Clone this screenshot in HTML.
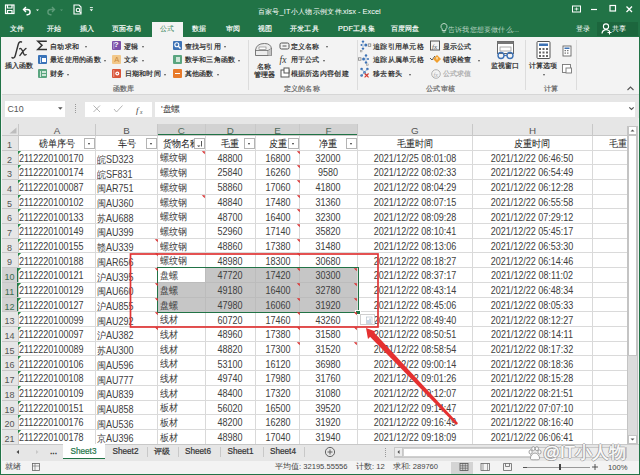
<!DOCTYPE html>
<html><head><meta charset="utf-8"><style>
html,body{margin:0;padding:0;}
body{width:640px;height:475px;overflow:hidden;position:relative;background:#f3f3f3;font-family:"Liberation Sans", sans-serif;}
body>div,body>svg{position:absolute;}
.t{white-space:nowrap;}
.r{-webkit-text-stroke:0.2px currentColor;}
</style></head><body>
<div style="left:0px;top:0px;width:640px;height:36.5px;background:#217346"></div>
<div style="left:0px;top:0px;width:1.2px;height:475px;background:#217346;z-index:50"></div>
<div style="left:638.8px;top:0px;width:1.2px;height:475px;background:#217346;z-index:50"></div>
<div style="left:0px;top:473.5px;width:640px;height:1.5px;background:#217346;z-index:50"></div>
<svg style="left:0;top:0;z-index:5" width="200" height="24" viewBox="0 0 200 24">
<g fill="none" stroke="#fff" stroke-width="1.2">
<rect x="5.5" y="5" width="8.5" height="8.5"/>
<path d="M7.5 5v3h4.5v-3M7.5 13.5v-3h4.5v3"/>
</g>
<path d="M26 7 l-2.5 2.5 2.5 2.5 M23.8 9.5 h3.7 a2.6 2.6 0 0 1 0 5.2 h-1" fill="none" stroke="#fff" stroke-width="1.4"/>
<path d="M36 9.5h3l-1.5 1.6z" fill="#fff"/>
<path d="M52 7 l2.5 2.5 -2.5 2.5 M54.2 9.5 h-3.7 a2.6 2.6 0 0 0 0 5.2 h1" fill="none" stroke="#5e9c7a" stroke-width="1.4"/>
<path d="M60 9.5h3l-1.5 1.6z" fill="#5e9c7a"/>
<g fill="none" stroke="#fff" stroke-width="1.1">
<path d="M74 5h5l2 2v7h-7z"/>
<circle cx="78" cy="10" r="1.8"/><path d="M79.3 11.3l1.7 1.7"/>
</g>
<path d="M89.7 9.3h3.4l-1.7 1.9z" fill="#fff"/>
<path d="M89.9 7.6h3" stroke="#fff" stroke-width="0.9"/>
</svg>
<div class="t" style="left:257.5px;top:7.5px;font-size:7.3px;line-height:7.3px;color:#fff;letter-spacing:.3px">百家号_IT小人物示例文件</div>
<div class="t" style="left:341px;top:7.5px;font-size:7.6px;line-height:7.6px;color:#fff;transform:scaleX(0.98);transform-origin:0 0;">.xlsx - Excel</div>
<svg style="left:560;top:0;z-index:5;left:560px" width="80" height="20" viewBox="0 0 80 20">
<g fill="none" stroke="#fff" stroke-width="1">
<rect x="12.5" y="6" width="8" height="6"/>
<path d="M14.5 9 h4 M16.5 7.5 v3" stroke-width="0.8"/>
<path d="M31 9.5h6" stroke-width="1.2"/>
<rect x="50" y="5.5" width="5.5" height="5.5" stroke-width="1.2"/>
<path d="M66.5 6.5l5.5 5.5M72 6.5l-5.5 5.5" stroke-width="1.3"/>
</g></svg>
<div style="left:152px;top:22px;width:31px;height:15px;background:#f3f3f3"></div>
<div class="t" style="left:160px;top:25px;font-size:7.3px;line-height:7.3px;color:#217346;letter-spacing:.2px">公式</div>
<div class="t" style="left:10px;top:25px;font-size:7.3px;line-height:7.3px;color:#fff;letter-spacing:.2px;-webkit-text-stroke:0.15px currentColor">文件</div>
<div class="t" style="left:47px;top:25px;font-size:7.3px;line-height:7.3px;color:#fff;letter-spacing:.2px;-webkit-text-stroke:0.15px currentColor">开始</div>
<div class="t" style="left:80px;top:25px;font-size:7.3px;line-height:7.3px;color:#fff;letter-spacing:.2px;-webkit-text-stroke:0.15px currentColor">插入</div>
<div class="t" style="left:112px;top:25px;font-size:7.3px;line-height:7.3px;color:#fff;letter-spacing:.2px;-webkit-text-stroke:0.15px currentColor">页面布局</div>
<div class="t" style="left:192px;top:25px;font-size:7.3px;line-height:7.3px;color:#fff;letter-spacing:.2px;-webkit-text-stroke:0.15px currentColor">数据</div>
<div class="t" style="left:226px;top:25px;font-size:7.3px;line-height:7.3px;color:#fff;letter-spacing:.2px;-webkit-text-stroke:0.15px currentColor">审阅</div>
<div class="t" style="left:258px;top:25px;font-size:7.3px;line-height:7.3px;color:#fff;letter-spacing:.2px;-webkit-text-stroke:0.15px currentColor">视图</div>
<div class="t" style="left:290px;top:25px;font-size:7.3px;line-height:7.3px;color:#fff;letter-spacing:.2px;-webkit-text-stroke:0.15px currentColor">开发工具</div>
<div class="t" style="left:338px;top:25px;font-size:7.3px;line-height:7.3px;color:#fff;letter-spacing:.2px;-webkit-text-stroke:0.15px currentColor">PDF工具集</div>
<div class="t" style="left:390.5px;top:25px;font-size:7.3px;line-height:7.3px;color:#fff;letter-spacing:.2px;-webkit-text-stroke:0.15px currentColor">百度网盘</div>
<div style="left:597px;top:21.5px;width:41px;height:14px;background:#1c663d"></div>
<svg style="left:437.5px;top:21px;z-index:5" width="12" height="14" viewBox="0 0 12 14">
<path d="M6 2.5a3 3 0 0 0-1.8 5.4v1.6h3.6v-1.6A3 3 0 0 0 6 2.5z M4.6 11h2.8" fill="none" stroke="#cfe3d6" stroke-width="0.9"/></svg>
<div class="t" style="left:448px;top:25.5px;font-size:7px;line-height:7px;color:#b9d4c3;letter-spacing:.2px">告诉我您想要做什么...</div>
<div class="t" style="left:576px;top:25px;font-size:7.3px;line-height:7.3px;color:#fff;letter-spacing:.3px">登录</div>
<svg style="left:601px;top:21px;z-index:5" width="12" height="14" viewBox="0 0 12 14">
<circle cx="5" cy="5.5" r="2.6" fill="none" stroke="#fff" stroke-width="1.1"/>
<path d="M1 12.5a4 4 0 0 1 7-2.5 M8.5 9.5v4 M6.5 11.5h4" fill="none" stroke="#fff" stroke-width="1.1"/></svg>
<div class="t" style="left:612px;top:25px;font-size:7.3px;line-height:7.3px;color:#fff;letter-spacing:.3px">共享</div>
<div style="left:1.5px;top:36.5px;width:637px;height:57px;background:#f3f3f3"></div>
<div style="left:1.5px;top:93.5px;width:637px;height:1px;background:#d6d6d6"></div>
<svg style="left:5px;top:38px" width="30" height="24" viewBox="0 0 30 24"><path d="M7 19.6Q9.3 21 10.3 17.5L13.2 6.5Q14.2 3 16.5 4" fill="none" stroke="#333" stroke-width="1.4" stroke-linecap="round"/><path d="M14.6 10.8Q16 9.8 17 12L18.8 16Q19.6 17.8 21.2 16.6M21 10.5Q20 10.6 14.8 17.6" fill="none" stroke="#333" stroke-width="1.3" stroke-linecap="round"/></svg>
<div class="t" style="left:4.5px;top:62px;font-size:7.3px;line-height:7.3px;color:#262626;letter-spacing:.3px;-webkit-text-stroke:0.2px currentColor">插入函数</div>
<svg style="left:36px;top:40px" width="12" height="11" viewBox="0 0 12 11"><path d="M10.8 1.2H1.8L6 5.3 1.8 9.6h9.2" fill="none" stroke="#333" stroke-width="1.5" stroke-linejoin="miter"/></svg>
<div class="t" style="left:50px;top:42.5px;font-size:7.3px;line-height:7.3px;color:#262626;letter-spacing:.3px;-webkit-text-stroke:0.2px currentColor">自动求和</div>
<div style="left:84.5px;top:46px;width:0;height:0;border-left:1.8px solid transparent;border-right:1.8px solid transparent;border-top:2px solid #555;z-index:4"></div>
<div style="left:38px;top:55px;width:9px;height:9px;background:#3a73b8;border-radius:1px"></div>
<div style="left:39.5px;top:56.5px;width:1px;height:6px;background:#bcd3ee"></div>
<div style="left:42px;top:57.5px;width:3.5px;height:4px;background:#fff"></div>
<div class="t" style="left:50px;top:55.5px;font-size:7.3px;line-height:7.3px;color:#262626;letter-spacing:.3px;-webkit-text-stroke:0.2px currentColor">最近使用的函数</div>
<div style="left:103.5px;top:59.5px;width:0;height:0;border-left:1.8px solid transparent;border-right:1.8px solid transparent;border-top:2px solid #555;z-index:4"></div>
<div style="left:38px;top:69px;width:9px;height:9px;background:#5aa57f;border-radius:1px"></div>
<div style="left:39.5px;top:70.5px;width:1px;height:6px;background:#cfe6d8"></div>
<div style="left:42px;top:71px;width:3.5px;height:5px;background:#cfe6d8"></div>
<div style="left:42px;top:73.2px;width:3.5px;height:0.8px;background:#5aa57f"></div>
<div class="t" style="left:50px;top:70px;font-size:7.3px;line-height:7.3px;color:#262626;letter-spacing:.3px;-webkit-text-stroke:0.2px currentColor">财务</div>
<div style="left:66.5px;top:73.5px;width:0;height:0;border-left:1.8px solid transparent;border-right:1.8px solid transparent;border-top:2px solid #555;z-index:4"></div>
<div style="left:112px;top:40.5px;width:9px;height:9px;background:#7b4fa8;border-radius:1px"></div>
<svg style="left:112px;top:40.5px" width="9" height="9" viewBox="0 0 9 9"><path d="M1.8 1v7" stroke="#c6b0dc" stroke-width="0.8"/></svg>
<div class="t" style="left:113.8px;top:41px;font-size:8px;line-height:8px;color:#fff;font-weight:bold">?</div>
<div class="t" style="left:124px;top:42.5px;font-size:7.3px;line-height:7.3px;color:#262626;letter-spacing:.3px;-webkit-text-stroke:0.2px currentColor">逻辑</div>
<div style="left:141.5px;top:46px;width:0;height:0;border-left:1.8px solid transparent;border-right:1.8px solid transparent;border-top:2px solid #555;z-index:4"></div>
<div style="left:112px;top:55px;width:9px;height:9px;background:#f2c88a;border-radius:1px"></div>
<div class="t" style="left:114.3px;top:55.8px;font-size:7.5px;line-height:7.5px;color:#c98a3e;">A</div>
<div class="t" style="left:124px;top:55.5px;font-size:7.3px;line-height:7.3px;color:#262626;letter-spacing:.3px;-webkit-text-stroke:0.2px currentColor">文本</div>
<div style="left:141.5px;top:59.5px;width:0;height:0;border-left:1.8px solid transparent;border-right:1.8px solid transparent;border-top:2px solid #555;z-index:4"></div>
<div style="left:112px;top:69px;width:9px;height:9px;background:#d9553a;border-radius:1px"></div>
<svg style="left:112px;top:69px" width="9" height="9" viewBox="0 0 9 9"><path d="M1.8 1v7" stroke="#f0b8a8" stroke-width="0.8"/><circle cx="5.3" cy="4.5" r="2" fill="#fff"/><circle cx="5.3" cy="4.5" r="0.8" fill="#d9553a"/></svg>
<div class="t" style="left:124.5px;top:70px;font-size:7.3px;line-height:7.3px;color:#262626;letter-spacing:.3px;-webkit-text-stroke:0.2px currentColor">日期和时间</div>
<div style="left:163.5px;top:73.5px;width:0;height:0;border-left:1.8px solid transparent;border-right:1.8px solid transparent;border-top:2px solid #555;z-index:4"></div>
<div class="t" style="left:112.5px;top:84.8px;font-size:7.3px;line-height:7.3px;color:#666;letter-spacing:.3px;-webkit-text-stroke:0.2px currentColor">函数库</div>
<div style="left:173px;top:40.5px;width:9px;height:9px;background:#3d72b5;border-radius:1px"></div>
<svg style="left:173px;top:40.5px" width="9" height="9" viewBox="0 0 9 9"><circle cx="3.8" cy="3.8" r="2" fill="none" stroke="#fff" stroke-width="1.1"/><path d="M5.3 5.3l2.2 2.2" stroke="#fff" stroke-width="1.3"/></svg>
<div class="t" style="left:184.5px;top:42.5px;font-size:7.3px;line-height:7.3px;color:#262626;letter-spacing:.3px;-webkit-text-stroke:0.2px currentColor">查找与引用</div>
<div style="left:223.5px;top:46px;width:0;height:0;border-left:1.8px solid transparent;border-right:1.8px solid transparent;border-top:2px solid #555;z-index:4"></div>
<div style="left:173px;top:55px;width:9px;height:9px;background:#5aa57f;border-radius:1px"></div>
<div style="left:175.5px;top:57px;width:4px;height:5px;background:#cfe6d8"></div>
<div class="t" style="left:184.5px;top:55.5px;font-size:7.3px;line-height:7.3px;color:#262626;letter-spacing:.3px;-webkit-text-stroke:0.2px currentColor">数学和三角函数</div>
<div style="left:238px;top:59.5px;width:0;height:0;border-left:1.8px solid transparent;border-right:1.8px solid transparent;border-top:2px solid #555;z-index:4"></div>
<div style="left:173px;top:69px;width:9px;height:9px;background:#e87a2a;border-radius:1px"></div>
<div style="left:175px;top:73px;width:5px;height:1px;background:#fff"></div>
<div class="t" style="left:184.5px;top:70px;font-size:7.3px;line-height:7.3px;color:#262626;letter-spacing:.3px;-webkit-text-stroke:0.2px currentColor">其他函数</div>
<div style="left:216.5px;top:73.5px;width:0;height:0;border-left:1.8px solid transparent;border-right:1.8px solid transparent;border-top:2px solid #555;z-index:4"></div>
<div style="left:248px;top:40px;width:1px;height:50px;background:#dcdcdc"></div>
<svg style="left:252px;top:41px" width="24" height="18" viewBox="0 0 24 18">
<path d="M3.5 14.5v-5.5q1-6.5 9-6.5q6.5 0 7 5.5v6.5z" fill="#ececec" stroke="#6a6a6a" stroke-width="0.9"/>
<path d="M3.5 9.5h12.5l3.5-2" fill="none" stroke="#6a6a6a" stroke-width="0.8"/>
<path d="M16 9.5v5" stroke="#6a6a6a" stroke-width="0.8"/>
<path d="M16.3 9.7l3-1.8v6.5h-3z" fill="#c4c4c4"/>
<rect x="7" y="6" width="7" height="2.6" fill="#fff" stroke="#777" stroke-width="0.6"/>
</svg>
<div class="t" style="left:257px;top:62.5px;font-size:7.3px;line-height:7.3px;color:#262626;letter-spacing:.3px;-webkit-text-stroke:0.2px currentColor">名称</div>
<div class="t" style="left:253.5px;top:71px;font-size:7.3px;line-height:7.3px;color:#262626;letter-spacing:.3px;-webkit-text-stroke:0.2px currentColor">管理器</div>
<svg style="left:278px;top:40px" width="14" height="40" viewBox="0 0 14 40">
<rect x="2" y="3" width="9" height="6" rx="1.5" fill="none" stroke="#555" stroke-width="1"/><path d="M4.5 6h4" stroke="#555"/>
<text x="1.5" y="22.5" font-size="9.5" font-style="italic" fill="#333" font-family="Liberation Serif">fx</text>
<rect x="3" y="30" width="8" height="7" fill="#fff" stroke="#555" stroke-width="1"/><rect x="6" y="28" width="5" height="5" fill="#fff" stroke="#555" stroke-width="1"/>
</svg>
<div class="t" style="left:290.5px;top:42.5px;font-size:7.3px;line-height:7.3px;color:#262626;letter-spacing:.3px;-webkit-text-stroke:0.2px currentColor">定义名称</div>
<div style="left:326px;top:46px;width:0;height:0;border-left:1.8px solid transparent;border-right:1.8px solid transparent;border-top:2px solid #555;z-index:4"></div>
<div class="t" style="left:290.5px;top:55.5px;font-size:7.3px;line-height:7.3px;color:#262626;letter-spacing:.3px;-webkit-text-stroke:0.2px currentColor">用于公式</div>
<div style="left:322.5px;top:59.5px;width:0;height:0;border-left:1.8px solid transparent;border-right:1.8px solid transparent;border-top:2px solid #555;z-index:4"></div>
<div class="t" style="left:290.5px;top:70px;font-size:7.3px;line-height:7.3px;color:#262626;letter-spacing:.3px;-webkit-text-stroke:0.2px currentColor">根据所选内容创建</div>
<div class="t" style="left:283.5px;top:84.8px;font-size:7.3px;line-height:7.3px;color:#666;letter-spacing:.3px;-webkit-text-stroke:0.2px currentColor">定义的名称</div>
<div style="left:357px;top:40px;width:1px;height:50px;background:#dcdcdc"></div>
<svg style="left:356px;top:38px" width="18" height="42" viewBox="0 0 18 42">
<g fill="#3d72b5"><circle cx="7" cy="3.6" r="1.2"/><circle cx="7" cy="10.6" r="1.2"/><circle cx="9.8" cy="7.1" r="1.5"/><circle cx="5.5" cy="7.1" r="1"/></g>
<path d="M7 4.8v4.6M6.5 7.1h2" stroke="#8fb0d8" stroke-width="0.8" stroke-dasharray="1 0.6"/>
<rect x="12.2" y="5.9" width="2.6" height="2.4" fill="none" stroke="#777" stroke-width="0.7"/>
<rect x="4.6" y="12.3" width="1.4" height="1.6" fill="none" stroke="#888" stroke-width="0.5"/>
<g fill="#3d72b5"><circle cx="10" cy="17.5" r="1.2"/><circle cx="10" cy="24.5" r="1.2"/><circle cx="7.6" cy="21" r="1.5"/><circle cx="12" cy="21" r="1"/></g>
<path d="M10 18.7v4.6M8.5 21h2.5" stroke="#8fb0d8" stroke-width="0.8" stroke-dasharray="1 0.6"/>
<rect x="2.4" y="19.8" width="2.6" height="2.4" fill="none" stroke="#777" stroke-width="0.7"/>
<rect x="10.6" y="26" width="1.6" height="1.6" fill="none" stroke="#888" stroke-width="0.5"/>
<g fill="#3d72b5"><circle cx="5.6" cy="31" r="1.3"/><circle cx="11.4" cy="31" r="1.3"/><circle cx="5.6" cy="37.5" r="1.3"/><circle cx="8.5" cy="34.2" r="1.2"/></g>
<path d="M5.6 31l5.8 6.5M11.4 31l-5.8 6.5" stroke="#6f98cc" stroke-width="0.8"/>
<path d="M8.6 35.5l4 3.8M12.6 35.5l-4 3.8" stroke="#d9372a" stroke-width="1.1"/>
</svg>
<div class="t" style="left:373px;top:42.5px;font-size:7.3px;line-height:7.3px;color:#262626;letter-spacing:.3px;-webkit-text-stroke:0.2px currentColor">追踪引用单元格</div>
<div class="t" style="left:373px;top:55.5px;font-size:7.3px;line-height:7.3px;color:#262626;letter-spacing:.3px;-webkit-text-stroke:0.2px currentColor">追踪从属单元格</div>
<div class="t" style="left:373px;top:70px;font-size:7.3px;line-height:7.3px;color:#262626;letter-spacing:.3px;-webkit-text-stroke:0.2px currentColor">移去箭头</div>
<div style="left:409px;top:73.5px;width:0;height:0;border-left:1.8px solid transparent;border-right:1.8px solid transparent;border-top:2px solid #555;z-index:4"></div>
<svg style="left:429px;top:39px" width="14" height="42" viewBox="0 0 14 42">
<rect x="1.5" y="2" width="9" height="9" fill="none" stroke="#555" stroke-width="1"/><text x="3" y="9.5" font-size="7" fill="#555" font-family="Liberation Serif" font-style="italic">fx</text>
<path d="M1 19l2 2 3-4" stroke="#555" fill="none" stroke-width="1"/><path d="M8 16l4 4-4 4-4-4z" fill="#f0a030"/><path d="M8 18v2.5" stroke="#fff" stroke-width="1"/>
<circle cx="7" cy="35" r="4.3" fill="none" stroke="#aaa" stroke-width="0.9"/><text x="4.5" y="37.5" font-size="6" fill="#aaa" font-family="Liberation Serif" font-style="italic">fx</text>
</svg>
<div class="t" style="left:442.5px;top:42.5px;font-size:7.3px;line-height:7.3px;color:#262626;letter-spacing:.3px;-webkit-text-stroke:0.2px currentColor">显示公式</div>
<div class="t" style="left:442.5px;top:55.5px;font-size:7.3px;line-height:7.3px;color:#262626;letter-spacing:.3px;-webkit-text-stroke:0.2px currentColor">错误检查</div>
<div style="left:477.5px;top:59.5px;width:0;height:0;border-left:1.8px solid transparent;border-right:1.8px solid transparent;border-top:2px solid #555;z-index:4"></div>
<div class="t" style="left:442.5px;top:70px;font-size:7.3px;line-height:7.3px;color:#aaa;letter-spacing:.3px;-webkit-text-stroke:0.2px currentColor">公式求值</div>
<div class="t" style="left:426px;top:84.8px;font-size:7.3px;line-height:7.3px;color:#666;letter-spacing:.3px;-webkit-text-stroke:0.2px currentColor">公式审核</div>
<svg style="left:495px;top:40px" width="22" height="20" viewBox="0 0 22 20">
<rect x="2.5" y="1.5" width="16" height="12" fill="#fff" stroke="#666" stroke-width="1"/><rect x="2.5" y="1.5" width="16" height="2.5" fill="#777"/>
<rect x="5" y="7" width="11" height="4" fill="none" stroke="#999" stroke-width="0.8"/>
<circle cx="6" cy="15.5" r="3" fill="none" stroke="#3d72b5" stroke-width="1.4"/><circle cx="15" cy="15.5" r="3" fill="none" stroke="#3d72b5" stroke-width="1.4"/><path d="M9 15.5h3" stroke="#3d72b5" stroke-width="1.2"/>
</svg>
<div class="t" style="left:490.5px;top:61.8px;font-size:7.3px;line-height:7.3px;color:#262626;letter-spacing:.3px;-webkit-text-stroke:0.2px currentColor">监视窗口</div>
<div style="left:524.5px;top:40px;width:1px;height:50px;background:#dcdcdc"></div>
<svg style="left:535px;top:40px" width="40" height="36" viewBox="0 0 40 36">
<rect x="2" y="1.5" width="13" height="17" rx="1" fill="#fff" stroke="#555" stroke-width="1"/><rect x="4" y="3.5" width="9" height="2.5" fill="#3d72b5"/>
<g fill="#666"><rect x="4" y="8" width="2" height="2"/><rect x="7.5" y="8" width="2" height="2"/><rect x="11" y="8" width="2" height="2"/>
<rect x="4" y="11.5" width="2" height="2"/><rect x="7.5" y="11.5" width="2" height="2"/><rect x="11" y="11.5" width="2" height="2"/>
<rect x="4" y="15" width="2" height="2"/><rect x="7.5" y="15" width="2" height="2"/><rect x="11" y="15" width="2" height="2"/></g>
<rect x="28" y="6" width="8" height="10" fill="#fff" stroke="#666" stroke-width="0.9"/><rect x="29.5" y="7.5" width="5" height="1.5" fill="#3d72b5"/>
<g fill="#777"><rect x="29.5" y="10" width="1.5" height="1.2"/><rect x="32" y="10" width="1.5" height="1.2"/><rect x="29.5" y="12.5" width="1.5" height="1.2"/><rect x="32" y="12.5" width="1.5" height="1.2"/></g>
<rect x="27.5" y="24.5" width="8" height="8" fill="#fff" stroke="#777" stroke-width="0.9"/><rect x="31" y="28" width="5.5" height="5" fill="#fff" stroke="#777" stroke-width="0.9"/>
</svg>
<div class="t" style="left:528.5px;top:62px;font-size:7.3px;line-height:7.3px;color:#262626;letter-spacing:.3px;-webkit-text-stroke:0.2px currentColor">计算选项</div>
<div style="left:543px;top:73.5px;width:0;height:0;border-left:1.8px solid transparent;border-right:1.8px solid transparent;border-top:2px solid #555;z-index:4"></div>
<div class="t" style="left:543.5px;top:84.8px;font-size:7.3px;line-height:7.3px;color:#666;letter-spacing:.3px;-webkit-text-stroke:0.2px currentColor">计算</div>
<div style="left:576px;top:40px;width:1px;height:50px;background:#dcdcdc"></div>
<svg style="left:626px;top:85px" width="9" height="7" viewBox="0 0 9 7"><path d="M1.5 5l3-3 3 3" fill="none" stroke="#555" stroke-width="1.1"/></svg>
<div style="left:1.5px;top:94.5px;width:637px;height:23px;background:#e6e6e6"></div>
<div style="left:5px;top:101px;width:60px;height:16px;background:#fff"></div>
<div class="t" style="left:7.5px;top:104.5px;font-size:8.8px;line-height:8.8px;color:#555;">C10</div>
<svg style="left:57px;top:106px" width="7" height="5" viewBox="0 0 7 5"><path d="M1 1.2h4.6L3.3 3.8z" fill="#555"/></svg>
<div style="left:74.5px;top:104px;width:1px;height:9px;border-left:1px dotted #999"></div>
<div style="left:85px;top:101.5px;width:67px;height:15px;background:#fff"></div>
<svg style="left:85px;top:101px" width="68" height="16" viewBox="0 0 68 16">
<path d="M8.5 4.5l6.5 6.5M15 4.5l-6.5 6.5" stroke="#aaa" stroke-width="0.9"/>
<path d="M29 8l2.5 3 6-6.5" fill="none" stroke="#aaa" stroke-width="0.9"/>
<text x="51" y="12" font-size="9" font-style="italic" fill="#444" font-family="Liberation Serif">f</text><text x="55" y="12.5" font-size="5.5" fill="#444" font-family="Liberation Serif" font-style="italic">x</text>
</svg>
<div style="left:154.5px;top:101.5px;width:480.5px;height:15px;background:#fff"></div>
<div class="t" style="left:160.5px;top:105px;font-size:9px;line-height:9px;color:#333;transform:scaleX(0.97);transform-origin:0 0;">&#x27;盘螺</div>
<svg style="left:627px;top:104px" width="9" height="8" viewBox="0 0 9 8"><path d="M2.3 3.3l2.2 2.2 2.2-2.2" fill="none" stroke="#555" stroke-width="1.2"/></svg>
<div style="left:1.5px;top:117px;width:626px;height:18.30000000000001px;background:#e6e6e6"></div>
<div style="left:157.5px;top:124.2px;width:199.8px;height:11.100000000000009px;background:#d2d2d2"></div>
<div style="left:157.5px;top:133.8px;width:199.8px;height:1.5px;background:#217346"></div>
<div style="left:18.2px;top:135.3px;width:608.8px;height:308.9px;background:#fff"></div>
<div style="left:1.5px;top:135.3px;width:16.7px;height:308.9px;background:#e6e6e6"></div>
<div style="left:1.5px;top:267.69000000000005px;width:16.7px;height:44.13px;background:#d2d2d2"></div>
<div style="left:16.7px;top:267.69000000000005px;width:1.5px;height:44.13px;background:#217346"></div>
<svg style="left:8px;top:127px" width="10" height="7" viewBox="0 0 10 7"><path d="M8.5 0.5v6h-7z" fill="#bdbdbd"/></svg>
<div style="left:95.1px;top:124.2px;width:1px;height:11.100000000000009px;background:#c8c8c8"></div>
<div style="left:95.1px;top:135.3px;width:1px;height:308.9px;background:#d9d9d9"></div>
<div style="left:157.0px;top:124.2px;width:1px;height:11.100000000000009px;background:#c8c8c8"></div>
<div style="left:157.0px;top:135.3px;width:1px;height:308.9px;background:#d9d9d9"></div>
<div style="left:204.5px;top:124.2px;width:1px;height:11.100000000000009px;background:#c8c8c8"></div>
<div style="left:204.5px;top:135.3px;width:1px;height:308.9px;background:#d9d9d9"></div>
<div style="left:255.1px;top:124.2px;width:1px;height:11.100000000000009px;background:#c8c8c8"></div>
<div style="left:255.1px;top:135.3px;width:1px;height:308.9px;background:#d9d9d9"></div>
<div style="left:299.1px;top:124.2px;width:1px;height:11.100000000000009px;background:#c8c8c8"></div>
<div style="left:299.1px;top:135.3px;width:1px;height:308.9px;background:#d9d9d9"></div>
<div style="left:356.8px;top:124.2px;width:1px;height:11.100000000000009px;background:#c8c8c8"></div>
<div style="left:356.8px;top:135.3px;width:1px;height:308.9px;background:#d9d9d9"></div>
<div style="left:472.0px;top:124.2px;width:1px;height:11.100000000000009px;background:#c8c8c8"></div>
<div style="left:472.0px;top:135.3px;width:1px;height:308.9px;background:#d9d9d9"></div>
<div style="left:591.9px;top:124.2px;width:1px;height:11.100000000000009px;background:#c8c8c8"></div>
<div style="left:591.9px;top:135.3px;width:1px;height:308.9px;background:#d9d9d9"></div>
<div style="left:17.7px;top:124.2px;width:1px;height:320.0px;background:#c8c8c8"></div>
<div style="left:1.5px;top:134.8px;width:626px;height:1px;background:#c8c8c8"></div>
<div style="left:18.2px;top:149.51000000000002px;width:608.8px;height:1px;background:#dadada"></div>
<div style="left:1.5px;top:149.51000000000002px;width:16.7px;height:1px;background:#c8c8c8"></div>
<div style="left:18.2px;top:164.22000000000003px;width:608.8px;height:1px;background:#dadada"></div>
<div style="left:1.5px;top:164.22000000000003px;width:16.7px;height:1px;background:#c8c8c8"></div>
<div style="left:18.2px;top:178.93px;width:608.8px;height:1px;background:#dadada"></div>
<div style="left:1.5px;top:178.93px;width:16.7px;height:1px;background:#c8c8c8"></div>
<div style="left:18.2px;top:193.64000000000001px;width:608.8px;height:1px;background:#dadada"></div>
<div style="left:1.5px;top:193.64000000000001px;width:16.7px;height:1px;background:#c8c8c8"></div>
<div style="left:18.2px;top:208.35000000000002px;width:608.8px;height:1px;background:#dadada"></div>
<div style="left:1.5px;top:208.35000000000002px;width:16.7px;height:1px;background:#c8c8c8"></div>
<div style="left:18.2px;top:223.06px;width:608.8px;height:1px;background:#dadada"></div>
<div style="left:1.5px;top:223.06px;width:16.7px;height:1px;background:#c8c8c8"></div>
<div style="left:18.2px;top:237.77px;width:608.8px;height:1px;background:#dadada"></div>
<div style="left:1.5px;top:237.77px;width:16.7px;height:1px;background:#c8c8c8"></div>
<div style="left:18.2px;top:252.48000000000002px;width:608.8px;height:1px;background:#dadada"></div>
<div style="left:1.5px;top:252.48000000000002px;width:16.7px;height:1px;background:#c8c8c8"></div>
<div style="left:18.2px;top:267.19000000000005px;width:608.8px;height:1px;background:#dadada"></div>
<div style="left:1.5px;top:267.19000000000005px;width:16.7px;height:1px;background:#c8c8c8"></div>
<div style="left:18.2px;top:281.90000000000003px;width:608.8px;height:1px;background:#dadada"></div>
<div style="left:1.5px;top:281.90000000000003px;width:16.7px;height:1px;background:#c8c8c8"></div>
<div style="left:18.2px;top:296.61px;width:608.8px;height:1px;background:#dadada"></div>
<div style="left:1.5px;top:296.61px;width:16.7px;height:1px;background:#c8c8c8"></div>
<div style="left:18.2px;top:311.32000000000005px;width:608.8px;height:1px;background:#dadada"></div>
<div style="left:1.5px;top:311.32000000000005px;width:16.7px;height:1px;background:#c8c8c8"></div>
<div style="left:18.2px;top:326.03000000000003px;width:608.8px;height:1px;background:#dadada"></div>
<div style="left:1.5px;top:326.03000000000003px;width:16.7px;height:1px;background:#c8c8c8"></div>
<div style="left:18.2px;top:340.74px;width:608.8px;height:1px;background:#dadada"></div>
<div style="left:1.5px;top:340.74px;width:16.7px;height:1px;background:#c8c8c8"></div>
<div style="left:18.2px;top:355.45000000000005px;width:608.8px;height:1px;background:#dadada"></div>
<div style="left:1.5px;top:355.45000000000005px;width:16.7px;height:1px;background:#c8c8c8"></div>
<div style="left:18.2px;top:370.16px;width:608.8px;height:1px;background:#dadada"></div>
<div style="left:1.5px;top:370.16px;width:16.7px;height:1px;background:#c8c8c8"></div>
<div style="left:18.2px;top:384.87px;width:608.8px;height:1px;background:#dadada"></div>
<div style="left:1.5px;top:384.87px;width:16.7px;height:1px;background:#c8c8c8"></div>
<div style="left:18.2px;top:399.58000000000004px;width:608.8px;height:1px;background:#dadada"></div>
<div style="left:1.5px;top:399.58000000000004px;width:16.7px;height:1px;background:#c8c8c8"></div>
<div style="left:18.2px;top:414.29px;width:608.8px;height:1px;background:#dadada"></div>
<div style="left:1.5px;top:414.29px;width:16.7px;height:1px;background:#c8c8c8"></div>
<div style="left:18.2px;top:429.00000000000006px;width:608.8px;height:1px;background:#dadada"></div>
<div style="left:1.5px;top:429.00000000000006px;width:16.7px;height:1px;background:#c8c8c8"></div>
<div style="left:18.2px;top:443.71000000000004px;width:608.8px;height:1px;background:#dadada"></div>
<div style="left:1.5px;top:443.71000000000004px;width:16.7px;height:1px;background:#c8c8c8"></div>
<div style="left:157.5px;top:133.8px;width:199.8px;height:1.5px;background:#217346"></div>
<div class="t" style="left:-43.1px;top:125.5px;width:200px;text-align:center;font-size:9.8px;line-height:9.8px;color:#555;">A</div>
<div class="t" style="left:26.549999999999997px;top:125.5px;width:200px;text-align:center;font-size:9.8px;line-height:9.8px;color:#555;">B</div>
<div class="t" style="left:81.25px;top:125.5px;width:200px;text-align:center;font-size:9.8px;line-height:9.8px;color:#50695a;">C</div>
<div class="t" style="left:130.3px;top:125.5px;width:200px;text-align:center;font-size:9.8px;line-height:9.8px;color:#50695a;">D</div>
<div class="t" style="left:177.60000000000002px;top:125.5px;width:200px;text-align:center;font-size:9.8px;line-height:9.8px;color:#50695a;">E</div>
<div class="t" style="left:228.45000000000005px;top:125.5px;width:200px;text-align:center;font-size:9.8px;line-height:9.8px;color:#50695a;">F</div>
<div class="t" style="left:314.9px;top:125.5px;width:200px;text-align:center;font-size:9.8px;line-height:9.8px;color:#555;">G</div>
<div class="t" style="left:432.45000000000005px;top:125.5px;width:200px;text-align:center;font-size:9.8px;line-height:9.8px;color:#555;">H</div>
<div class="t" style="left:-0.5px;top:140.8px;width:20px;text-align:center;font-size:9px;line-height:9px;color:#555;">1</div>
<div class="t" style="left:-0.5px;top:155.51000000000002px;width:20px;text-align:center;font-size:9px;line-height:9px;color:#555;">2</div>
<div class="t" style="left:-0.5px;top:170.22000000000003px;width:20px;text-align:center;font-size:9px;line-height:9px;color:#555;">3</div>
<div class="t" style="left:-0.5px;top:184.93px;width:20px;text-align:center;font-size:9px;line-height:9px;color:#555;">4</div>
<div class="t" style="left:-0.5px;top:199.64000000000001px;width:20px;text-align:center;font-size:9px;line-height:9px;color:#555;">5</div>
<div class="t" style="left:-0.5px;top:214.35000000000002px;width:20px;text-align:center;font-size:9px;line-height:9px;color:#555;">6</div>
<div class="t" style="left:-0.5px;top:229.06px;width:20px;text-align:center;font-size:9px;line-height:9px;color:#555;">7</div>
<div class="t" style="left:-0.5px;top:243.77px;width:20px;text-align:center;font-size:9px;line-height:9px;color:#555;">8</div>
<div class="t" style="left:-0.5px;top:258.48px;width:20px;text-align:center;font-size:9px;line-height:9px;color:#555;">9</div>
<div class="t" style="left:-0.5px;top:273.19000000000005px;width:20px;text-align:center;font-size:9px;line-height:9px;color:#3d6b50;">10</div>
<div class="t" style="left:-0.5px;top:287.90000000000003px;width:20px;text-align:center;font-size:9px;line-height:9px;color:#3d6b50;">11</div>
<div class="t" style="left:-0.5px;top:302.61px;width:20px;text-align:center;font-size:9px;line-height:9px;color:#3d6b50;">12</div>
<div class="t" style="left:-0.5px;top:317.32000000000005px;width:20px;text-align:center;font-size:9px;line-height:9px;color:#555;">13</div>
<div class="t" style="left:-0.5px;top:332.03000000000003px;width:20px;text-align:center;font-size:9px;line-height:9px;color:#555;">14</div>
<div class="t" style="left:-0.5px;top:346.74px;width:20px;text-align:center;font-size:9px;line-height:9px;color:#555;">15</div>
<div class="t" style="left:-0.5px;top:361.45000000000005px;width:20px;text-align:center;font-size:9px;line-height:9px;color:#555;">16</div>
<div class="t" style="left:-0.5px;top:376.16px;width:20px;text-align:center;font-size:9px;line-height:9px;color:#555;">17</div>
<div class="t" style="left:-0.5px;top:390.87px;width:20px;text-align:center;font-size:9px;line-height:9px;color:#555;">18</div>
<div class="t" style="left:-0.5px;top:405.58000000000004px;width:20px;text-align:center;font-size:9px;line-height:9px;color:#555;">19</div>
<div class="t" style="left:-0.5px;top:420.29px;width:20px;text-align:center;font-size:9px;line-height:9px;color:#555;">20</div>
<div class="t" style="left:-0.5px;top:435.00000000000006px;width:20px;text-align:center;font-size:9px;line-height:9px;color:#555;">21</div>
<div style="left:205px;top:267.69000000000005px;width:152.3px;height:44.13px;background:#c6c6c6"></div>
<div style="left:157.5px;top:282.40000000000003px;width:47.5px;height:29.42px;background:#c6c6c6"></div>
<div style="left:157.5px;top:281.90000000000003px;width:199.8px;height:1px;background:#bcbcbc"></div>
<div style="left:157.5px;top:296.61px;width:199.8px;height:1px;background:#bcbcbc"></div>
<div style="left:204.5px;top:267.69000000000005px;width:1px;height:44.13px;background:#bcbcbc"></div>
<div style="left:255.1px;top:267.69000000000005px;width:1px;height:44.13px;background:#bcbcbc"></div>
<div style="left:299.1px;top:267.69000000000005px;width:1px;height:44.13px;background:#bcbcbc"></div>
<div class="t" style="left:-43.1px;top:138.8px;width:200px;text-align:center;font-size:10px;line-height:10px;color:#262626;transform:scaleX(0.903);-webkit-text-stroke:0.05px currentColor">磅单序号</div>
<div class="t" style="left:26.549999999999997px;top:138.8px;width:200px;text-align:center;font-size:10px;line-height:10px;color:#262626;transform:scaleX(0.903);-webkit-text-stroke:0.05px currentColor">车号</div>
<div class="t" style="left:81.25px;top:138.8px;width:200px;text-align:center;font-size:10px;line-height:10px;color:#262626;transform:scaleX(0.903);-webkit-text-stroke:0.05px currentColor">货物名称</div>
<div class="t" style="left:130.3px;top:138.8px;width:200px;text-align:center;font-size:10px;line-height:10px;color:#262626;transform:scaleX(0.903);-webkit-text-stroke:0.05px currentColor">毛重</div>
<div class="t" style="left:177.60000000000002px;top:138.8px;width:200px;text-align:center;font-size:10px;line-height:10px;color:#262626;transform:scaleX(0.903);-webkit-text-stroke:0.05px currentColor">皮重</div>
<div class="t" style="left:228.45000000000005px;top:138.8px;width:200px;text-align:center;font-size:10px;line-height:10px;color:#262626;transform:scaleX(0.903);-webkit-text-stroke:0.05px currentColor">净重</div>
<div class="t" style="left:314.9px;top:138.8px;width:200px;text-align:center;font-size:10px;line-height:10px;color:#262626;transform:scaleX(0.903);-webkit-text-stroke:0.05px currentColor">毛重时间</div>
<div class="t" style="left:432.45000000000005px;top:138.8px;width:200px;text-align:center;font-size:10px;line-height:10px;color:#262626;transform:scaleX(0.903);-webkit-text-stroke:0.05px currentColor">皮重时间</div>
<div class="t" style="left:608.5px;top:138.8px;font-size:10px;line-height:10px;color:#262626;transform:scaleX(0.903);transform-origin:0 0;">毛重</div>
<div style="left:592.9px;top:135.8px;width:34px;height:13.71px;"></div>
<div style="left:84.3px;top:138.3px;width:11px;height:10.6px;background:#fff;border:0.9px solid #b4b4b4;box-sizing:border-box;z-index:3"></div>
<div style="left:87.8px;top:142.8px;width:0;height:0;border-left:1.8px solid transparent;border-right:1.8px solid transparent;border-top:2px solid #333;z-index:4"></div>
<div style="left:146.2px;top:138.3px;width:11px;height:10.6px;background:#fff;border:0.9px solid #b4b4b4;box-sizing:border-box;z-index:3"></div>
<div style="left:149.7px;top:142.8px;width:0;height:0;border-left:1.8px solid transparent;border-right:1.8px solid transparent;border-top:2px solid #333;z-index:4"></div>
<div style="left:244.29999999999998px;top:138.3px;width:11px;height:10.6px;background:#fff;border:0.9px solid #b4b4b4;box-sizing:border-box;z-index:3"></div>
<div style="left:247.79999999999998px;top:142.8px;width:0;height:0;border-left:1.8px solid transparent;border-right:1.8px solid transparent;border-top:2px solid #333;z-index:4"></div>
<div style="left:288.3px;top:138.3px;width:11px;height:10.6px;background:#fff;border:0.9px solid #b4b4b4;box-sizing:border-box;z-index:3"></div>
<div style="left:291.8px;top:142.8px;width:0;height:0;border-left:1.8px solid transparent;border-right:1.8px solid transparent;border-top:2px solid #333;z-index:4"></div>
<div style="left:346.0px;top:138.3px;width:11px;height:10.6px;background:#fff;border:0.9px solid #b4b4b4;box-sizing:border-box;z-index:3"></div>
<div style="left:349.5px;top:142.8px;width:0;height:0;border-left:1.8px solid transparent;border-right:1.8px solid transparent;border-top:2px solid #333;z-index:4"></div>
<div style="left:193.7px;top:138.3px;width:11px;height:10.6px;background:#fff;border:0.9px solid #b4b4b4;box-sizing:border-box;z-index:3"></div>
<svg style="left:193.7px;top:138.3px;z-index:4" width="11" height="11" viewBox="0 0 11 11"><path d="M3 7.5h3.5l-1.75 1.6z" fill="#444"/><path d="M7.5 3v5.5" stroke="#444" stroke-width="0.9"/></svg>
<div class="t" style="left:18.9px;top:153.71000000000004px;font-size:10px;line-height:10px;color:#404040;transform:scaleX(0.9);transform-origin:0 0;">2112220100170</div>
<div class="t" style="left:97.3px;top:154.91000000000003px;font-size:10px;line-height:10px;color:#404040;transform:scaleX(0.9);transform-origin:0 0;">皖SD323</div>
<div class="t" style="left:159.6px;top:153.41000000000003px;font-size:10px;line-height:10px;color:#404040;transform:scaleX(0.903);transform-origin:0 0;">螺纹钢</div>
<div class="t" style="left:130.3px;top:153.71000000000004px;width:200px;text-align:center;font-size:10px;line-height:10px;color:#404040;transform:scaleX(0.9);">48800</div>
<div class="t" style="left:177.60000000000002px;top:153.71000000000004px;width:200px;text-align:center;font-size:10px;line-height:10px;color:#404040;transform:scaleX(0.9);">16800</div>
<div class="t" style="left:228.45000000000005px;top:153.71000000000004px;width:200px;text-align:center;font-size:10px;line-height:10px;color:#404040;transform:scaleX(0.9);">32000</div>
<div class="t" style="left:314.9px;top:153.71000000000004px;width:200px;text-align:center;font-size:10px;line-height:10px;color:#404040;transform:scaleX(0.9);">2021/12/25 08:01:08</div>
<div class="t" style="left:432.45000000000005px;top:153.71000000000004px;width:200px;text-align:center;font-size:10px;line-height:10px;color:#404040;transform:scaleX(0.9);">2021/12/22 06:46:50</div>
<div class="t" style="left:18.9px;top:168.42000000000004px;font-size:10px;line-height:10px;color:#404040;transform:scaleX(0.9);transform-origin:0 0;">2112220100174</div>
<div class="t" style="left:97.3px;top:169.62000000000003px;font-size:10px;line-height:10px;color:#404040;transform:scaleX(0.9);transform-origin:0 0;">皖SF831</div>
<div class="t" style="left:159.6px;top:168.12000000000003px;font-size:10px;line-height:10px;color:#404040;transform:scaleX(0.903);transform-origin:0 0;">螺纹钢</div>
<div class="t" style="left:130.3px;top:168.42000000000004px;width:200px;text-align:center;font-size:10px;line-height:10px;color:#404040;transform:scaleX(0.9);">25840</div>
<div class="t" style="left:177.60000000000002px;top:168.42000000000004px;width:200px;text-align:center;font-size:10px;line-height:10px;color:#404040;transform:scaleX(0.9);">16260</div>
<div class="t" style="left:228.45000000000005px;top:168.42000000000004px;width:200px;text-align:center;font-size:10px;line-height:10px;color:#404040;transform:scaleX(0.9);">9580</div>
<div class="t" style="left:314.9px;top:168.42000000000004px;width:200px;text-align:center;font-size:10px;line-height:10px;color:#404040;transform:scaleX(0.9);">2021/12/22 08:02:33</div>
<div class="t" style="left:432.45000000000005px;top:168.42000000000004px;width:200px;text-align:center;font-size:10px;line-height:10px;color:#404040;transform:scaleX(0.9);">2021/12/22 06:54:49</div>
<div class="t" style="left:18.9px;top:183.13000000000002px;font-size:10px;line-height:10px;color:#404040;transform:scaleX(0.9);transform-origin:0 0;">2112220100087</div>
<div class="t" style="left:97.3px;top:184.33px;font-size:10px;line-height:10px;color:#404040;transform:scaleX(0.9);transform-origin:0 0;">闽AR751</div>
<div class="t" style="left:159.6px;top:182.83px;font-size:10px;line-height:10px;color:#404040;transform:scaleX(0.903);transform-origin:0 0;">螺纹钢</div>
<div class="t" style="left:130.3px;top:183.13000000000002px;width:200px;text-align:center;font-size:10px;line-height:10px;color:#404040;transform:scaleX(0.9);">58860</div>
<div class="t" style="left:177.60000000000002px;top:183.13000000000002px;width:200px;text-align:center;font-size:10px;line-height:10px;color:#404040;transform:scaleX(0.9);">17060</div>
<div class="t" style="left:228.45000000000005px;top:183.13000000000002px;width:200px;text-align:center;font-size:10px;line-height:10px;color:#404040;transform:scaleX(0.9);">41800</div>
<div class="t" style="left:314.9px;top:183.13000000000002px;width:200px;text-align:center;font-size:10px;line-height:10px;color:#404040;transform:scaleX(0.9);">2021/12/22 08:04:29</div>
<div class="t" style="left:432.45000000000005px;top:183.13000000000002px;width:200px;text-align:center;font-size:10px;line-height:10px;color:#404040;transform:scaleX(0.9);">2021/12/22 06:12:28</div>
<div class="t" style="left:18.9px;top:197.84000000000003px;font-size:10px;line-height:10px;color:#404040;transform:scaleX(0.9);transform-origin:0 0;">2112220100102</div>
<div class="t" style="left:97.3px;top:199.04000000000002px;font-size:10px;line-height:10px;color:#404040;transform:scaleX(0.9);transform-origin:0 0;">闽AU360</div>
<div class="t" style="left:159.6px;top:197.54000000000002px;font-size:10px;line-height:10px;color:#404040;transform:scaleX(0.903);transform-origin:0 0;">螺纹钢</div>
<div class="t" style="left:130.3px;top:197.84000000000003px;width:200px;text-align:center;font-size:10px;line-height:10px;color:#404040;transform:scaleX(0.9);">48840</div>
<div class="t" style="left:177.60000000000002px;top:197.84000000000003px;width:200px;text-align:center;font-size:10px;line-height:10px;color:#404040;transform:scaleX(0.9);">17480</div>
<div class="t" style="left:228.45000000000005px;top:197.84000000000003px;width:200px;text-align:center;font-size:10px;line-height:10px;color:#404040;transform:scaleX(0.9);">31360</div>
<div class="t" style="left:314.9px;top:197.84000000000003px;width:200px;text-align:center;font-size:10px;line-height:10px;color:#404040;transform:scaleX(0.9);">2021/12/22 08:07:15</div>
<div class="t" style="left:432.45000000000005px;top:197.84000000000003px;width:200px;text-align:center;font-size:10px;line-height:10px;color:#404040;transform:scaleX(0.9);">2021/12/22 06:55:58</div>
<div class="t" style="left:18.9px;top:212.55000000000004px;font-size:10px;line-height:10px;color:#404040;transform:scaleX(0.9);transform-origin:0 0;">2112220100133</div>
<div class="t" style="left:97.3px;top:213.75000000000003px;font-size:10px;line-height:10px;color:#404040;transform:scaleX(0.9);transform-origin:0 0;">苏AU688</div>
<div class="t" style="left:159.6px;top:212.25000000000003px;font-size:10px;line-height:10px;color:#404040;transform:scaleX(0.903);transform-origin:0 0;">螺纹钢</div>
<div class="t" style="left:130.3px;top:212.55000000000004px;width:200px;text-align:center;font-size:10px;line-height:10px;color:#404040;transform:scaleX(0.9);">48700</div>
<div class="t" style="left:177.60000000000002px;top:212.55000000000004px;width:200px;text-align:center;font-size:10px;line-height:10px;color:#404040;transform:scaleX(0.9);">16400</div>
<div class="t" style="left:228.45000000000005px;top:212.55000000000004px;width:200px;text-align:center;font-size:10px;line-height:10px;color:#404040;transform:scaleX(0.9);">32300</div>
<div class="t" style="left:314.9px;top:212.55000000000004px;width:200px;text-align:center;font-size:10px;line-height:10px;color:#404040;transform:scaleX(0.9);">2021/12/22 08:09:28</div>
<div class="t" style="left:432.45000000000005px;top:212.55000000000004px;width:200px;text-align:center;font-size:10px;line-height:10px;color:#404040;transform:scaleX(0.9);">2021/12/22 07:29:12</div>
<div class="t" style="left:18.9px;top:227.26000000000002px;font-size:10px;line-height:10px;color:#404040;transform:scaleX(0.9);transform-origin:0 0;">2112220100149</div>
<div class="t" style="left:97.3px;top:228.46px;font-size:10px;line-height:10px;color:#404040;transform:scaleX(0.9);transform-origin:0 0;">闽AU399</div>
<div class="t" style="left:159.6px;top:226.96px;font-size:10px;line-height:10px;color:#404040;transform:scaleX(0.903);transform-origin:0 0;">螺纹钢</div>
<div class="t" style="left:130.3px;top:227.26000000000002px;width:200px;text-align:center;font-size:10px;line-height:10px;color:#404040;transform:scaleX(0.9);">52960</div>
<div class="t" style="left:177.60000000000002px;top:227.26000000000002px;width:200px;text-align:center;font-size:10px;line-height:10px;color:#404040;transform:scaleX(0.9);">17140</div>
<div class="t" style="left:228.45000000000005px;top:227.26000000000002px;width:200px;text-align:center;font-size:10px;line-height:10px;color:#404040;transform:scaleX(0.9);">35820</div>
<div class="t" style="left:314.9px;top:227.26000000000002px;width:200px;text-align:center;font-size:10px;line-height:10px;color:#404040;transform:scaleX(0.9);">2021/12/22 08:10:41</div>
<div class="t" style="left:432.45000000000005px;top:227.26000000000002px;width:200px;text-align:center;font-size:10px;line-height:10px;color:#404040;transform:scaleX(0.9);">2021/12/22 05:45:17</div>
<div class="t" style="left:18.9px;top:241.97000000000003px;font-size:10px;line-height:10px;color:#404040;transform:scaleX(0.9);transform-origin:0 0;">2112220100155</div>
<div class="t" style="left:97.3px;top:243.17000000000002px;font-size:10px;line-height:10px;color:#404040;transform:scaleX(0.9);transform-origin:0 0;">赣AU339</div>
<div class="t" style="left:159.6px;top:241.67000000000002px;font-size:10px;line-height:10px;color:#404040;transform:scaleX(0.903);transform-origin:0 0;">螺纹钢</div>
<div class="t" style="left:130.3px;top:241.97000000000003px;width:200px;text-align:center;font-size:10px;line-height:10px;color:#404040;transform:scaleX(0.9);">48860</div>
<div class="t" style="left:177.60000000000002px;top:241.97000000000003px;width:200px;text-align:center;font-size:10px;line-height:10px;color:#404040;transform:scaleX(0.9);">17380</div>
<div class="t" style="left:228.45000000000005px;top:241.97000000000003px;width:200px;text-align:center;font-size:10px;line-height:10px;color:#404040;transform:scaleX(0.9);">31480</div>
<div class="t" style="left:314.9px;top:241.97000000000003px;width:200px;text-align:center;font-size:10px;line-height:10px;color:#404040;transform:scaleX(0.9);">2021/12/22 08:13:06</div>
<div class="t" style="left:432.45000000000005px;top:241.97000000000003px;width:200px;text-align:center;font-size:10px;line-height:10px;color:#404040;transform:scaleX(0.9);">2021/12/22 06:53:30</div>
<div class="t" style="left:18.9px;top:256.68px;font-size:10px;line-height:10px;color:#404040;transform:scaleX(0.9);transform-origin:0 0;">2112220100188</div>
<div class="t" style="left:97.3px;top:257.88px;font-size:10px;line-height:10px;color:#404040;transform:scaleX(0.9);transform-origin:0 0;">闽AR656</div>
<div class="t" style="left:159.6px;top:256.38px;font-size:10px;line-height:10px;color:#404040;transform:scaleX(0.903);transform-origin:0 0;">螺纹钢</div>
<div class="t" style="left:130.3px;top:256.68px;width:200px;text-align:center;font-size:10px;line-height:10px;color:#404040;transform:scaleX(0.9);">48980</div>
<div class="t" style="left:177.60000000000002px;top:256.68px;width:200px;text-align:center;font-size:10px;line-height:10px;color:#404040;transform:scaleX(0.9);">18300</div>
<div class="t" style="left:228.45000000000005px;top:256.68px;width:200px;text-align:center;font-size:10px;line-height:10px;color:#404040;transform:scaleX(0.9);">30680</div>
<div class="t" style="left:314.9px;top:256.68px;width:200px;text-align:center;font-size:10px;line-height:10px;color:#404040;transform:scaleX(0.9);">2021/12/22 08:18:27</div>
<div class="t" style="left:432.45000000000005px;top:256.68px;width:200px;text-align:center;font-size:10px;line-height:10px;color:#404040;transform:scaleX(0.9);">2021/12/22 06:14:46</div>
<div class="t" style="left:18.9px;top:271.39000000000004px;font-size:10px;line-height:10px;color:#404040;transform:scaleX(0.9);transform-origin:0 0;">2112220100121</div>
<div class="t" style="left:97.3px;top:272.59000000000003px;font-size:10px;line-height:10px;color:#404040;transform:scaleX(0.9);transform-origin:0 0;">沪AU395</div>
<div class="t" style="left:159.6px;top:271.09000000000003px;font-size:10px;line-height:10px;color:#404040;transform:scaleX(0.903);transform-origin:0 0;">盘螺</div>
<div class="t" style="left:130.3px;top:271.39000000000004px;width:200px;text-align:center;font-size:10px;line-height:10px;color:#404040;transform:scaleX(0.9);">47720</div>
<div class="t" style="left:177.60000000000002px;top:271.39000000000004px;width:200px;text-align:center;font-size:10px;line-height:10px;color:#404040;transform:scaleX(0.9);">17420</div>
<div class="t" style="left:228.45000000000005px;top:271.39000000000004px;width:200px;text-align:center;font-size:10px;line-height:10px;color:#404040;transform:scaleX(0.9);">30300</div>
<div class="t" style="left:314.9px;top:271.39000000000004px;width:200px;text-align:center;font-size:10px;line-height:10px;color:#404040;transform:scaleX(0.9);">2021/12/22 08:37:17</div>
<div class="t" style="left:432.45000000000005px;top:271.39000000000004px;width:200px;text-align:center;font-size:10px;line-height:10px;color:#404040;transform:scaleX(0.9);">2021/12/22 08:11:02</div>
<div class="t" style="left:18.9px;top:286.1px;font-size:10px;line-height:10px;color:#404040;transform:scaleX(0.9);transform-origin:0 0;">2112220100129</div>
<div class="t" style="left:97.3px;top:287.3px;font-size:10px;line-height:10px;color:#404040;transform:scaleX(0.9);transform-origin:0 0;">闽AU660</div>
<div class="t" style="left:159.6px;top:285.8px;font-size:10px;line-height:10px;color:#404040;transform:scaleX(0.903);transform-origin:0 0;">盘螺</div>
<div class="t" style="left:130.3px;top:286.1px;width:200px;text-align:center;font-size:10px;line-height:10px;color:#404040;transform:scaleX(0.9);">49180</div>
<div class="t" style="left:177.60000000000002px;top:286.1px;width:200px;text-align:center;font-size:10px;line-height:10px;color:#404040;transform:scaleX(0.9);">16400</div>
<div class="t" style="left:228.45000000000005px;top:286.1px;width:200px;text-align:center;font-size:10px;line-height:10px;color:#404040;transform:scaleX(0.9);">32780</div>
<div class="t" style="left:314.9px;top:286.1px;width:200px;text-align:center;font-size:10px;line-height:10px;color:#404040;transform:scaleX(0.9);">2021/12/22 08:43:14</div>
<div class="t" style="left:432.45000000000005px;top:286.1px;width:200px;text-align:center;font-size:10px;line-height:10px;color:#404040;transform:scaleX(0.9);">2021/12/22 06:48:34</div>
<div class="t" style="left:18.9px;top:300.81px;font-size:10px;line-height:10px;color:#404040;transform:scaleX(0.9);transform-origin:0 0;">2112220100127</div>
<div class="t" style="left:97.3px;top:302.01px;font-size:10px;line-height:10px;color:#404040;transform:scaleX(0.9);transform-origin:0 0;">沪AU855</div>
<div class="t" style="left:159.6px;top:300.51px;font-size:10px;line-height:10px;color:#404040;transform:scaleX(0.903);transform-origin:0 0;">盘螺</div>
<div class="t" style="left:130.3px;top:300.81px;width:200px;text-align:center;font-size:10px;line-height:10px;color:#404040;transform:scaleX(0.9);">47980</div>
<div class="t" style="left:177.60000000000002px;top:300.81px;width:200px;text-align:center;font-size:10px;line-height:10px;color:#404040;transform:scaleX(0.9);">16060</div>
<div class="t" style="left:228.45000000000005px;top:300.81px;width:200px;text-align:center;font-size:10px;line-height:10px;color:#404040;transform:scaleX(0.9);">31920</div>
<div class="t" style="left:314.9px;top:300.81px;width:200px;text-align:center;font-size:10px;line-height:10px;color:#404040;transform:scaleX(0.9);">2021/12/22 08:45:06</div>
<div class="t" style="left:432.45000000000005px;top:300.81px;width:200px;text-align:center;font-size:10px;line-height:10px;color:#404040;transform:scaleX(0.9);">2021/12/22 08:05:33</div>
<div class="t" style="left:18.9px;top:315.52000000000004px;font-size:10px;line-height:10px;color:#404040;transform:scaleX(0.9);transform-origin:0 0;">2112220100099</div>
<div class="t" style="left:97.3px;top:316.72px;font-size:10px;line-height:10px;color:#404040;transform:scaleX(0.9);transform-origin:0 0;">闽AU292</div>
<div class="t" style="left:159.6px;top:315.22px;font-size:10px;line-height:10px;color:#404040;transform:scaleX(0.903);transform-origin:0 0;">线材</div>
<div class="t" style="left:130.3px;top:315.52000000000004px;width:200px;text-align:center;font-size:10px;line-height:10px;color:#404040;transform:scaleX(0.9);">60720</div>
<div class="t" style="left:177.60000000000002px;top:315.52000000000004px;width:200px;text-align:center;font-size:10px;line-height:10px;color:#404040;transform:scaleX(0.9);">17460</div>
<div class="t" style="left:228.45000000000005px;top:315.52000000000004px;width:200px;text-align:center;font-size:10px;line-height:10px;color:#404040;transform:scaleX(0.9);">43260</div>
<div class="t" style="left:314.9px;top:315.52000000000004px;width:200px;text-align:center;font-size:10px;line-height:10px;color:#404040;transform:scaleX(0.9);">2021/12/22 08:49:40</div>
<div class="t" style="left:432.45000000000005px;top:315.52000000000004px;width:200px;text-align:center;font-size:10px;line-height:10px;color:#404040;transform:scaleX(0.9);">2021/12/22 08:12:27</div>
<div class="t" style="left:18.9px;top:330.23px;font-size:10px;line-height:10px;color:#404040;transform:scaleX(0.9);transform-origin:0 0;">2112220100097</div>
<div class="t" style="left:97.3px;top:331.43px;font-size:10px;line-height:10px;color:#404040;transform:scaleX(0.9);transform-origin:0 0;">沪AU382</div>
<div class="t" style="left:159.6px;top:329.93px;font-size:10px;line-height:10px;color:#404040;transform:scaleX(0.903);transform-origin:0 0;">线材</div>
<div class="t" style="left:130.3px;top:330.23px;width:200px;text-align:center;font-size:10px;line-height:10px;color:#404040;transform:scaleX(0.9);">48960</div>
<div class="t" style="left:177.60000000000002px;top:330.23px;width:200px;text-align:center;font-size:10px;line-height:10px;color:#404040;transform:scaleX(0.9);">17380</div>
<div class="t" style="left:228.45000000000005px;top:330.23px;width:200px;text-align:center;font-size:10px;line-height:10px;color:#404040;transform:scaleX(0.9);">31580</div>
<div class="t" style="left:314.9px;top:330.23px;width:200px;text-align:center;font-size:10px;line-height:10px;color:#404040;transform:scaleX(0.9);">2021/12/22 08:50:51</div>
<div class="t" style="left:432.45000000000005px;top:330.23px;width:200px;text-align:center;font-size:10px;line-height:10px;color:#404040;transform:scaleX(0.9);">2021/12/22 08:14:11</div>
<div class="t" style="left:18.9px;top:344.94px;font-size:10px;line-height:10px;color:#404040;transform:scaleX(0.9);transform-origin:0 0;">2112220100089</div>
<div class="t" style="left:97.3px;top:346.14px;font-size:10px;line-height:10px;color:#404040;transform:scaleX(0.9);transform-origin:0 0;">苏AU300</div>
<div class="t" style="left:159.6px;top:344.64px;font-size:10px;line-height:10px;color:#404040;transform:scaleX(0.903);transform-origin:0 0;">线材</div>
<div class="t" style="left:130.3px;top:344.94px;width:200px;text-align:center;font-size:10px;line-height:10px;color:#404040;transform:scaleX(0.9);">48820</div>
<div class="t" style="left:177.60000000000002px;top:344.94px;width:200px;text-align:center;font-size:10px;line-height:10px;color:#404040;transform:scaleX(0.9);">17300</div>
<div class="t" style="left:228.45000000000005px;top:344.94px;width:200px;text-align:center;font-size:10px;line-height:10px;color:#404040;transform:scaleX(0.9);">31520</div>
<div class="t" style="left:314.9px;top:344.94px;width:200px;text-align:center;font-size:10px;line-height:10px;color:#404040;transform:scaleX(0.9);">2021/12/22 08:58:54</div>
<div class="t" style="left:432.45000000000005px;top:344.94px;width:200px;text-align:center;font-size:10px;line-height:10px;color:#404040;transform:scaleX(0.9);">2021/12/22 08:17:32</div>
<div class="t" style="left:18.9px;top:359.65000000000003px;font-size:10px;line-height:10px;color:#404040;transform:scaleX(0.9);transform-origin:0 0;">2112220100106</div>
<div class="t" style="left:97.3px;top:360.85px;font-size:10px;line-height:10px;color:#404040;transform:scaleX(0.9);transform-origin:0 0;">闽AU596</div>
<div class="t" style="left:159.6px;top:359.35px;font-size:10px;line-height:10px;color:#404040;transform:scaleX(0.903);transform-origin:0 0;">线材</div>
<div class="t" style="left:130.3px;top:359.65000000000003px;width:200px;text-align:center;font-size:10px;line-height:10px;color:#404040;transform:scaleX(0.9);">53100</div>
<div class="t" style="left:177.60000000000002px;top:359.65000000000003px;width:200px;text-align:center;font-size:10px;line-height:10px;color:#404040;transform:scaleX(0.9);">16120</div>
<div class="t" style="left:228.45000000000005px;top:359.65000000000003px;width:200px;text-align:center;font-size:10px;line-height:10px;color:#404040;transform:scaleX(0.9);">36980</div>
<div class="t" style="left:314.9px;top:359.65000000000003px;width:200px;text-align:center;font-size:10px;line-height:10px;color:#404040;transform:scaleX(0.9);">2021/12/22 09:00:14</div>
<div class="t" style="left:432.45000000000005px;top:359.65000000000003px;width:200px;text-align:center;font-size:10px;line-height:10px;color:#404040;transform:scaleX(0.9);">2021/12/22 08:18:36</div>
<div class="t" style="left:18.9px;top:374.36px;font-size:10px;line-height:10px;color:#404040;transform:scaleX(0.9);transform-origin:0 0;">2112220100108</div>
<div class="t" style="left:97.3px;top:375.56px;font-size:10px;line-height:10px;color:#404040;transform:scaleX(0.9);transform-origin:0 0;">闽AU777</div>
<div class="t" style="left:159.6px;top:374.06px;font-size:10px;line-height:10px;color:#404040;transform:scaleX(0.903);transform-origin:0 0;">线材</div>
<div class="t" style="left:130.3px;top:374.36px;width:200px;text-align:center;font-size:10px;line-height:10px;color:#404040;transform:scaleX(0.9);">49740</div>
<div class="t" style="left:177.60000000000002px;top:374.36px;width:200px;text-align:center;font-size:10px;line-height:10px;color:#404040;transform:scaleX(0.9);">17980</div>
<div class="t" style="left:228.45000000000005px;top:374.36px;width:200px;text-align:center;font-size:10px;line-height:10px;color:#404040;transform:scaleX(0.9);">31760</div>
<div class="t" style="left:314.9px;top:374.36px;width:200px;text-align:center;font-size:10px;line-height:10px;color:#404040;transform:scaleX(0.9);">2021/12/22 09:01:26</div>
<div class="t" style="left:432.45000000000005px;top:374.36px;width:200px;text-align:center;font-size:10px;line-height:10px;color:#404040;transform:scaleX(0.9);">2021/12/22 08:15:28</div>
<div class="t" style="left:18.9px;top:389.07px;font-size:10px;line-height:10px;color:#404040;transform:scaleX(0.9);transform-origin:0 0;">2112220100109</div>
<div class="t" style="left:97.3px;top:390.27px;font-size:10px;line-height:10px;color:#404040;transform:scaleX(0.9);transform-origin:0 0;">闽AU839</div>
<div class="t" style="left:159.6px;top:388.77px;font-size:10px;line-height:10px;color:#404040;transform:scaleX(0.903);transform-origin:0 0;">线材</div>
<div class="t" style="left:130.3px;top:389.07px;width:200px;text-align:center;font-size:10px;line-height:10px;color:#404040;transform:scaleX(0.9);">48400</div>
<div class="t" style="left:177.60000000000002px;top:389.07px;width:200px;text-align:center;font-size:10px;line-height:10px;color:#404040;transform:scaleX(0.9);">17320</div>
<div class="t" style="left:228.45000000000005px;top:389.07px;width:200px;text-align:center;font-size:10px;line-height:10px;color:#404040;transform:scaleX(0.9);">31080</div>
<div class="t" style="left:314.9px;top:389.07px;width:200px;text-align:center;font-size:10px;line-height:10px;color:#404040;transform:scaleX(0.9);">2021/12/22 09:12:07</div>
<div class="t" style="left:432.45000000000005px;top:389.07px;width:200px;text-align:center;font-size:10px;line-height:10px;color:#404040;transform:scaleX(0.9);">2021/12/22 08:21:51</div>
<div class="t" style="left:18.9px;top:403.78000000000003px;font-size:10px;line-height:10px;color:#404040;transform:scaleX(0.9);transform-origin:0 0;">2112220100151</div>
<div class="t" style="left:97.3px;top:404.98px;font-size:10px;line-height:10px;color:#404040;transform:scaleX(0.9);transform-origin:0 0;">闽AU858</div>
<div class="t" style="left:159.6px;top:403.48px;font-size:10px;line-height:10px;color:#404040;transform:scaleX(0.903);transform-origin:0 0;">板材</div>
<div class="t" style="left:130.3px;top:403.78000000000003px;width:200px;text-align:center;font-size:10px;line-height:10px;color:#404040;transform:scaleX(0.9);">56020</div>
<div class="t" style="left:177.60000000000002px;top:403.78000000000003px;width:200px;text-align:center;font-size:10px;line-height:10px;color:#404040;transform:scaleX(0.9);">16500</div>
<div class="t" style="left:228.45000000000005px;top:403.78000000000003px;width:200px;text-align:center;font-size:10px;line-height:10px;color:#404040;transform:scaleX(0.9);">39520</div>
<div class="t" style="left:314.9px;top:403.78000000000003px;width:200px;text-align:center;font-size:10px;line-height:10px;color:#404040;transform:scaleX(0.9);">2021/12/22 09:14:47</div>
<div class="t" style="left:432.45000000000005px;top:403.78000000000003px;width:200px;text-align:center;font-size:10px;line-height:10px;color:#404040;transform:scaleX(0.9);">2021/12/22 07:07:10</div>
<div class="t" style="left:18.9px;top:418.49px;font-size:10px;line-height:10px;color:#404040;transform:scaleX(0.9);transform-origin:0 0;">2112220100176</div>
<div class="t" style="left:97.3px;top:419.69px;font-size:10px;line-height:10px;color:#404040;transform:scaleX(0.9);transform-origin:0 0;">闽AU536</div>
<div class="t" style="left:159.6px;top:418.19px;font-size:10px;line-height:10px;color:#404040;transform:scaleX(0.903);transform-origin:0 0;">板材</div>
<div class="t" style="left:130.3px;top:418.49px;width:200px;text-align:center;font-size:10px;line-height:10px;color:#404040;transform:scaleX(0.9);">48200</div>
<div class="t" style="left:177.60000000000002px;top:418.49px;width:200px;text-align:center;font-size:10px;line-height:10px;color:#404040;transform:scaleX(0.9);">16280</div>
<div class="t" style="left:228.45000000000005px;top:418.49px;width:200px;text-align:center;font-size:10px;line-height:10px;color:#404040;transform:scaleX(0.9);">31920</div>
<div class="t" style="left:314.9px;top:418.49px;width:200px;text-align:center;font-size:10px;line-height:10px;color:#404040;transform:scaleX(0.9);">2021/12/22 09:16:49</div>
<div class="t" style="left:432.45000000000005px;top:418.49px;width:200px;text-align:center;font-size:10px;line-height:10px;color:#404040;transform:scaleX(0.9);">2021/12/22 08:16:40</div>
<div class="t" style="left:18.9px;top:433.20000000000005px;font-size:10px;line-height:10px;color:#404040;transform:scaleX(0.9);transform-origin:0 0;">2112220100178</div>
<div class="t" style="left:97.3px;top:434.40000000000003px;font-size:10px;line-height:10px;color:#404040;transform:scaleX(0.9);transform-origin:0 0;">京AU396</div>
<div class="t" style="left:159.6px;top:432.90000000000003px;font-size:10px;line-height:10px;color:#404040;transform:scaleX(0.903);transform-origin:0 0;">板材</div>
<div class="t" style="left:130.3px;top:433.20000000000005px;width:200px;text-align:center;font-size:10px;line-height:10px;color:#404040;transform:scaleX(0.9);">48980</div>
<div class="t" style="left:177.60000000000002px;top:433.20000000000005px;width:200px;text-align:center;font-size:10px;line-height:10px;color:#404040;transform:scaleX(0.9);">17040</div>
<div class="t" style="left:228.45000000000005px;top:433.20000000000005px;width:200px;text-align:center;font-size:10px;line-height:10px;color:#404040;transform:scaleX(0.9);">31940</div>
<div class="t" style="left:314.9px;top:433.20000000000005px;width:200px;text-align:center;font-size:10px;line-height:10px;color:#404040;transform:scaleX(0.9);">2021/12/22 09:18:09</div>
<div class="t" style="left:432.45000000000005px;top:433.20000000000005px;width:200px;text-align:center;font-size:10px;line-height:10px;color:#404040;transform:scaleX(0.9);">2021/12/22 06:06:41</div>
<div style="left:157.5px;top:267.69000000000005px;width:47.5px;height:14.71px;background:#fff"></div>
<div class="t" style="left:159.6px;top:270.59000000000003px;font-size:10px;line-height:10px;color:#404040;transform:scaleX(0.903);transform-origin:0 0;">盘螺</div>
<div style="left:157.0px;top:267.19000000000005px;width:199.8px;height:44.13px;border:1.6px solid #217346;box-sizing:content-box;z-index:10"></div>
<div style="left:355.3px;top:309.82000000000005px;width:3.5px;height:3.5px;background:#217346;z-index:11;border:0.5px solid #fff"></div>
<svg style="left:18.2px;top:150.51000000000002px" width="4" height="4" viewBox="0 0 4 4"><path d="M0 0h3.2L0 3.2z" fill="#2a8a4a"/></svg>
<svg style="left:18.2px;top:165.22000000000003px" width="4" height="4" viewBox="0 0 4 4"><path d="M0 0h3.2L0 3.2z" fill="#2a8a4a"/></svg>
<svg style="left:18.2px;top:179.93px" width="4" height="4" viewBox="0 0 4 4"><path d="M0 0h3.2L0 3.2z" fill="#2a8a4a"/></svg>
<svg style="left:18.2px;top:194.64000000000001px" width="4" height="4" viewBox="0 0 4 4"><path d="M0 0h3.2L0 3.2z" fill="#2a8a4a"/></svg>
<svg style="left:18.2px;top:209.35000000000002px" width="4" height="4" viewBox="0 0 4 4"><path d="M0 0h3.2L0 3.2z" fill="#2a8a4a"/></svg>
<svg style="left:18.2px;top:224.06px" width="4" height="4" viewBox="0 0 4 4"><path d="M0 0h3.2L0 3.2z" fill="#2a8a4a"/></svg>
<svg style="left:18.2px;top:238.77px" width="4" height="4" viewBox="0 0 4 4"><path d="M0 0h3.2L0 3.2z" fill="#2a8a4a"/></svg>
<svg style="left:18.2px;top:253.48000000000002px" width="4" height="4" viewBox="0 0 4 4"><path d="M0 0h3.2L0 3.2z" fill="#2a8a4a"/></svg>
<svg style="left:18.2px;top:268.19000000000005px" width="4" height="4" viewBox="0 0 4 4"><path d="M0 0h3.2L0 3.2z" fill="#2a8a4a"/></svg>
<svg style="left:18.2px;top:282.90000000000003px" width="4" height="4" viewBox="0 0 4 4"><path d="M0 0h3.2L0 3.2z" fill="#2a8a4a"/></svg>
<svg style="left:18.2px;top:297.61px" width="4" height="4" viewBox="0 0 4 4"><path d="M0 0h3.2L0 3.2z" fill="#2a8a4a"/></svg>
<svg style="left:18.2px;top:312.32000000000005px" width="4" height="4" viewBox="0 0 4 4"><path d="M0 0h3.2L0 3.2z" fill="#2a8a4a"/></svg>
<svg style="left:18.2px;top:327.03000000000003px" width="4" height="4" viewBox="0 0 4 4"><path d="M0 0h3.2L0 3.2z" fill="#2a8a4a"/></svg>
<svg style="left:18.2px;top:341.74px" width="4" height="4" viewBox="0 0 4 4"><path d="M0 0h3.2L0 3.2z" fill="#2a8a4a"/></svg>
<svg style="left:18.2px;top:356.45000000000005px" width="4" height="4" viewBox="0 0 4 4"><path d="M0 0h3.2L0 3.2z" fill="#2a8a4a"/></svg>
<svg style="left:18.2px;top:371.16px" width="4" height="4" viewBox="0 0 4 4"><path d="M0 0h3.2L0 3.2z" fill="#2a8a4a"/></svg>
<svg style="left:18.2px;top:385.87px" width="4" height="4" viewBox="0 0 4 4"><path d="M0 0h3.2L0 3.2z" fill="#2a8a4a"/></svg>
<svg style="left:18.2px;top:400.58000000000004px" width="4" height="4" viewBox="0 0 4 4"><path d="M0 0h3.2L0 3.2z" fill="#2a8a4a"/></svg>
<svg style="left:18.2px;top:415.29px" width="4" height="4" viewBox="0 0 4 4"><path d="M0 0h3.2L0 3.2z" fill="#2a8a4a"/></svg>
<svg style="left:18.2px;top:430.00000000000006px" width="4" height="4" viewBox="0 0 4 4"><path d="M0 0h3.2L0 3.2z" fill="#2a8a4a"/></svg>
<svg style="left:295.6px;top:150.51000000000002px;z-index:12" width="4" height="4" viewBox="0 0 4 4"><path d="M0.8 0.2h3v3z" fill="#d83030"/></svg>
<svg style="left:295.6px;top:165.22000000000003px;z-index:12" width="4" height="4" viewBox="0 0 4 4"><path d="M0.8 0.2h3v3z" fill="#d83030"/></svg>
<svg style="left:295.6px;top:179.93px;z-index:12" width="4" height="4" viewBox="0 0 4 4"><path d="M0.8 0.2h3v3z" fill="#d83030"/></svg>
<svg style="left:295.6px;top:194.64000000000001px;z-index:12" width="4" height="4" viewBox="0 0 4 4"><path d="M0.8 0.2h3v3z" fill="#d83030"/></svg>
<svg style="left:295.6px;top:209.35000000000002px;z-index:12" width="4" height="4" viewBox="0 0 4 4"><path d="M0.8 0.2h3v3z" fill="#d83030"/></svg>
<svg style="left:295.6px;top:224.06px;z-index:12" width="4" height="4" viewBox="0 0 4 4"><path d="M0.8 0.2h3v3z" fill="#d83030"/></svg>
<svg style="left:295.6px;top:238.77px;z-index:12" width="4" height="4" viewBox="0 0 4 4"><path d="M0.8 0.2h3v3z" fill="#d83030"/></svg>
<svg style="left:295.6px;top:253.48000000000002px;z-index:12" width="4" height="4" viewBox="0 0 4 4"><path d="M0.8 0.2h3v3z" fill="#d83030"/></svg>
<svg style="left:295.6px;top:268.19000000000005px;z-index:12" width="4" height="4" viewBox="0 0 4 4"><path d="M0.8 0.2h3v3z" fill="#d83030"/></svg>
<svg style="left:295.6px;top:282.90000000000003px;z-index:12" width="4" height="4" viewBox="0 0 4 4"><path d="M0.8 0.2h3v3z" fill="#d83030"/></svg>
<svg style="left:295.6px;top:297.61px;z-index:12" width="4" height="4" viewBox="0 0 4 4"><path d="M0.8 0.2h3v3z" fill="#d83030"/></svg>
<svg style="left:295.6px;top:312.32000000000005px;z-index:12" width="4" height="4" viewBox="0 0 4 4"><path d="M0.8 0.2h3v3z" fill="#d83030"/></svg>
<svg style="left:295.6px;top:327.03000000000003px;z-index:12" width="4" height="4" viewBox="0 0 4 4"><path d="M0.8 0.2h3v3z" fill="#d83030"/></svg>
<svg style="left:295.6px;top:341.74px;z-index:12" width="4" height="4" viewBox="0 0 4 4"><path d="M0.8 0.2h3v3z" fill="#d83030"/></svg>
<svg style="left:201px;top:150.51000000000002px;z-index:12" width="4" height="4" viewBox="0 0 4 4"><path d="M0.8 0.2h3v3z" fill="#d83030"/></svg>
<svg style="left:201px;top:194.64000000000001px;z-index:12" width="4" height="4" viewBox="0 0 4 4"><path d="M0.8 0.2h3v3z" fill="#d83030"/></svg>
<svg style="left:153.5px;top:238.77px;z-index:12" width="4" height="4" viewBox="0 0 4 4"><path d="M0.8 0.2h3v3z" fill="#d83030"/></svg>
<svg style="left:153.5px;top:253.48000000000002px;z-index:12" width="4" height="4" viewBox="0 0 4 4"><path d="M0.8 0.2h3v3z" fill="#d83030"/></svg>
<svg style="left:153.5px;top:268.19000000000005px;z-index:12" width="4" height="4" viewBox="0 0 4 4"><path d="M0.8 0.2h3v3z" fill="#d83030"/></svg>
<svg style="left:153.5px;top:282.90000000000003px;z-index:12" width="4" height="4" viewBox="0 0 4 4"><path d="M0.8 0.2h3v3z" fill="#d83030"/></svg>
<svg style="left:153.5px;top:297.61px;z-index:12" width="4" height="4" viewBox="0 0 4 4"><path d="M0.8 0.2h3v3z" fill="#d83030"/></svg>
<svg style="left:153.5px;top:312.32000000000005px;z-index:12" width="4" height="4" viewBox="0 0 4 4"><path d="M0.8 0.2h3v3z" fill="#d83030"/></svg>
<svg style="left:153.5px;top:327.03000000000003px;z-index:12" width="4" height="4" viewBox="0 0 4 4"><path d="M0.8 0.2h3v3z" fill="#d83030"/></svg>
<svg style="left:353.3px;top:268.19000000000005px;z-index:12" width="4" height="4" viewBox="0 0 4 4"><path d="M0.8 0.2h3v3z" fill="#d83030"/></svg>
<svg style="left:353.3px;top:282.90000000000003px;z-index:12" width="4" height="4" viewBox="0 0 4 4"><path d="M0.8 0.2h3v3z" fill="#d83030"/></svg>
<svg style="left:353.3px;top:297.61px;z-index:12" width="4" height="4" viewBox="0 0 4 4"><path d="M0.8 0.2h3v3z" fill="#d83030"/></svg>
<svg style="left:353.3px;top:312.32000000000005px;z-index:12" width="4" height="4" viewBox="0 0 4 4"><path d="M0.8 0.2h3v3z" fill="#d83030"/></svg>
<svg style="left:353.3px;top:327.03000000000003px;z-index:12" width="4" height="4" viewBox="0 0 4 4"><path d="M0.8 0.2h3v3z" fill="#d83030"/></svg>
<svg style="left:353.3px;top:341.74px;z-index:12" width="4" height="4" viewBox="0 0 4 4"><path d="M0.8 0.2h3v3z" fill="#d83030"/></svg>
<div style="left:627px;top:117px;width:11px;height:327.2px;background:#e6e6e6"></div>
<div style="left:627px;top:125.5px;width:10.5px;height:318.7px;background:#dcdcdc;border:0.6px solid #c4c4c4;box-sizing:border-box"></div>
<div style="left:627.5px;top:126px;width:9.5px;height:9px;background:#fff;border:0.6px solid #c4c4c4;box-sizing:border-box"></div>
<div style="left:627.5px;top:135px;width:9.5px;height:221px;background:#fff;border:0.6px solid #c4c4c4;box-sizing:border-box"></div>
<div style="left:627.5px;top:435px;width:9.5px;height:9.2px;background:#fff;border:0.6px solid #c4c4c4;box-sizing:border-box"></div>
<svg style="left:628px;top:126px" width="9" height="9" viewBox="0 0 9 9"><path d="M2.5 5.5h4l-2-2z" fill="#555"/></svg>
<svg style="left:628px;top:435px" width="9" height="9" viewBox="0 0 9 9"><path d="M2.5 3.5h4l-2 2z" fill="#555"/></svg>
<div style="left:1.5px;top:444.2px;width:637px;height:17px;background:#e6e6e6"></div>
<div style="left:1.5px;top:444.2px;width:637px;height:0.8px;background:#c8c8c8"></div>
<svg style="left:14px;top:447px" width="30" height="10" viewBox="0 0 30 10"><path d="M5 3l-2.5 2 2.5 2z" fill="#444"/><path d="M22 3l2.5 2-2.5 2z" fill="#c8c8c8"/></svg>
<div class="t" style="left:50px;top:447px;font-size:8.5px;line-height:8.5px;color:#333;-webkit-text-stroke:0.3px currentColor">...</div>
<div style="left:62.5px;top:444.2px;width:42px;height:14px;background:#fff"></div>
<div style="left:62.5px;top:458px;width:42px;height:1.3px;background:#217346"></div>
<div class="t" style="left:70.5px;top:448px;font-size:8.2px;line-height:8.2px;color:#217346;-webkit-text-stroke:0.2px currentColor">Sheet3</div>
<div class="t" style="left:112.5px;top:448px;font-size:8.2px;line-height:8.2px;color:#333;-webkit-text-stroke:0.2px currentColor">Sheet2</div>
<div class="t" style="left:153.7px;top:448px;font-size:8.2px;line-height:8.2px;color:#333;-webkit-text-stroke:0.2px currentColor">评级</div>
<div class="t" style="left:185px;top:448px;font-size:8.2px;line-height:8.2px;color:#333;-webkit-text-stroke:0.2px currentColor">Sheet6</div>
<div class="t" style="left:227.5px;top:448px;font-size:8.2px;line-height:8.2px;color:#333;-webkit-text-stroke:0.2px currentColor">Sheet1</div>
<div class="t" style="left:270px;top:448px;font-size:8.2px;line-height:8.2px;color:#333;-webkit-text-stroke:0.2px currentColor">Sheet4</div>
<div style="left:147px;top:447px;width:0.8px;height:10px;background:#c8c8c8"></div>
<div style="left:178px;top:447px;width:0.8px;height:10px;background:#c8c8c8"></div>
<div style="left:220px;top:447px;width:0.8px;height:10px;background:#c8c8c8"></div>
<div style="left:262.5px;top:447px;width:0.8px;height:10px;background:#c8c8c8"></div>
<div style="left:303.7px;top:447px;width:0.8px;height:10px;background:#c8c8c8"></div>
<svg style="left:324px;top:446px" width="12" height="12" viewBox="0 0 12 12"><circle cx="6" cy="6" r="4.6" fill="none" stroke="#555" stroke-width="0.9"/><path d="M6 3.5v5M3.5 6h5" stroke="#555" stroke-width="0.9"/></svg>
<div style="left:385px;top:448px;width:1px;height:9px;border-left:1px dotted #999"></div>
<div style="left:394px;top:447px;width:233px;height:10.5px;background:#ececec;border:0.6px solid #c8c8c8;box-sizing:border-box"></div>
<div style="left:402.5px;top:447.5px;width:128px;height:9.5px;background:#fff;border:0.5px solid #d0d0d0;box-sizing:border-box"></div>
<div style="left:394px;top:447px;width:8.5px;height:10px;border:0.5px solid #c8c8c8;box-sizing:border-box"></div>
<svg style="left:394px;top:447px" width="9" height="10" viewBox="0 0 9 10"><path d="M5.5 3v4l-2-2z" fill="#444"/></svg>
<div style="left:1.5px;top:461.2px;width:637px;height:12px;background:#f3f3f3"></div>
<div class="t" style="left:5px;top:463px;font-size:7.6px;line-height:7.6px;color:#444;">就绪</div>
<svg style="left:31px;top:462px" width="10" height="10" viewBox="0 0 10 10"><rect x="1.5" y="1.5" width="7" height="7" fill="none" stroke="#666" stroke-width="0.8"/><path d="M1.5 4h7M4 1.5v7" stroke="#666" stroke-width="0.6"/></svg>
<div class="t" style="left:275px;top:463px;font-size:7.6px;line-height:7.6px;color:#444;">平均值: 32195.55556</div>
<div class="t" style="left:356px;top:463px;font-size:7.6px;line-height:7.6px;color:#444;">计数: 12</div>
<div class="t" style="left:392.5px;top:463px;font-size:7.6px;line-height:7.6px;color:#444;">求和: 289760</div>
<div style="left:451px;top:461.5px;width:22px;height:12px;background:#d4d4d4"></div>
<svg style="left:456px;top:461px" width="60" height="12" viewBox="0 0 60 12">
<rect x="4" y="2.5" width="8" height="7" fill="none" stroke="#555" stroke-width="0.8"/><path d="M4 4.8h8M4 7.2h8M6.7 2.5v7M9.3 2.5v7" stroke="#555" stroke-width="0.6"/>
<rect x="25" y="2.5" width="8.5" height="7" fill="none" stroke="#666" stroke-width="0.8"/><path d="M27 2.5v7M31.5 2.5v7" stroke="#666" stroke-width="0.6"/>
<path d="M47.5 2.5h8v7h-8z M49.5 2.5v3h4v-3" fill="none" stroke="#666" stroke-width="0.8"/>
</svg>
<div style="left:522.5px;top:467px;width:4px;height:0.9px;background:#555"></div>
<div style="left:527px;top:467.2px;width:63px;height:0.8px;background:#999"></div>
<div style="left:558.5px;top:463.8px;width:2px;height:6.5px;background:#444"></div>
<svg style="left:591px;top:463px" width="8" height="8" viewBox="0 0 8 8"><path d="M4 1v6M1 4h6" stroke="#444" stroke-width="0.9"/></svg>
<div class="t" style="left:608px;top:463.5px;font-size:7.6px;line-height:7.6px;color:#444;">100%</div>
<svg style="left:0;top:0;z-index:30" width="640" height="475" viewBox="0 0 640 475">
<rect x="130.5" y="254" width="247.5" height="73" fill="none" stroke="#e03434" stroke-width="1.7"/>
<path d="M373.2 331.4 L457.9 423.1 Q457.6 424.9 456 424.8 L368.8 335.6 Z" fill="#e53030"/>
<path d="M366 328 L375.5 331.5 L368 339 Z" fill="#e53030"/>
</svg>
<div style="left:360.3px;top:314.2px;width:14.4px;height:11.3px;background:#fff;border:0.7px solid #cfcfcf;box-sizing:border-box;z-index:13"></div>
<svg style="left:360px;top:314px;z-index:14" width="15" height="12" viewBox="0 0 15 12"><rect x="6.5" y="3" width="5.5" height="6.5" fill="none" stroke="#b9c3cc" stroke-width="0.7"/><path d="M8 9v-3M10 9v-4.5" stroke="#8fb0d0" stroke-width="1"/></svg>
<div class="t" style="left:543px;top:444.3px;font-size:16.8px;line-height:17px;color:#fcfcfc;z-index:40;-webkit-text-stroke:0.45px #fcfcfc;text-shadow:0.9px 0 0 #909090,-0.9px 0 0 #909090,0 0.9px 0 #909090,0 -0.9px 0 #909090">@IT小人物</div>
<svg style="left:528px;top:446px;z-index:40" width="14" height="15" viewBox="0 0 14 15"><g fill="#fcfcfc" stroke="#8c8c8c" stroke-width="0.8"><ellipse cx="2.6" cy="6" rx="1.6" ry="2"/><ellipse cx="5.3" cy="2.7" rx="1.6" ry="2"/><ellipse cx="8.9" cy="2.7" rx="1.6" ry="2"/><ellipse cx="11.5" cy="6" rx="1.6" ry="2"/><path d="M7 7c2.6 0 4.6 3.2 4.6 5.2s-2 1.6-4.6 1.6-4.6.4-4.6-1.6 2-5.2 4.6-5.2z"/></g></svg>
</body></html>
